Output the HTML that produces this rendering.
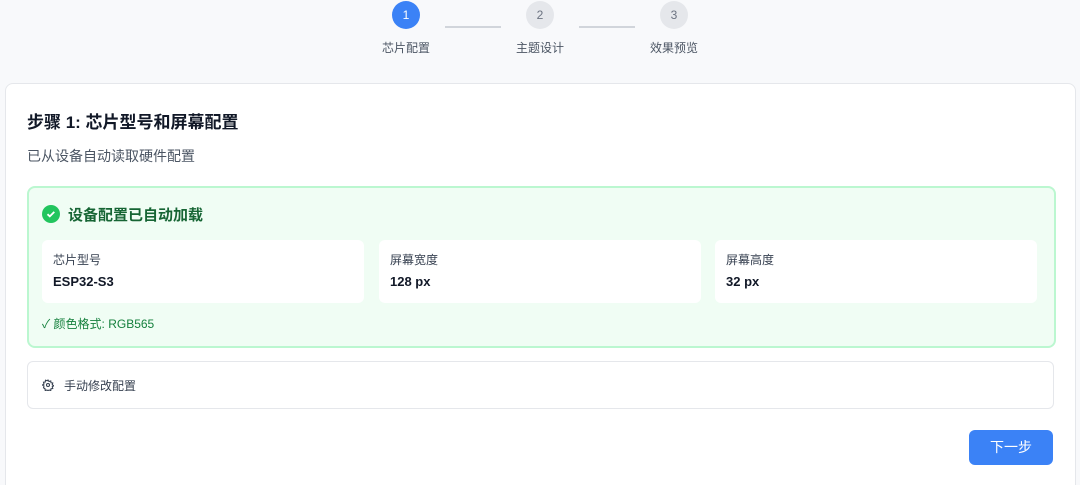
<!DOCTYPE html><html><head><meta charset="utf-8"><style>
html,body{margin:0;width:1080px;height:485px;overflow:hidden}
body{background:#f8f9fb;font-family:"Liberation Sans","Noto Sans CJK SC",sans-serif;position:relative}
.c{position:absolute;border-radius:50%;width:28px;height:28px;top:1px;text-align:center;line-height:28px;font-size:12px}
.l{position:absolute;top:39px;font-size:12px;color:#4b5563}
.ln{position:absolute;top:26px;height:2px;background:#d1d5db;width:56px}
.card{position:absolute;left:5px;top:83px;width:1069px;height:410px;background:#fff;border:1px solid #e5e7eb;border-radius:8px}
.g{position:absolute;left:21px;top:102px;width:1025px;height:158px;background:#f0fdf4;border:2px solid #bbf7d0;border-radius:8px}
.b{position:absolute;top:52px;width:322px;height:63px;background:#fff;border-radius:6px}
.b .k{position:absolute;left:11px;top:11px;font-size:12px;color:#374151}
.b .v{position:absolute;left:11px;top:34px;font-size:13px;color:#111827;font-weight:bold}
</style></head><body>
<div class="c" style="left:392px;background:#3b82f6;color:#fff">1</div>
<div class="c" style="left:526px;background:#e5e7eb;color:#6b7280">2</div>
<div class="c" style="left:660px;background:#e5e7eb;color:#6b7280">3</div>
<div class="ln" style="left:445px"></div><div class="ln" style="left:579px"></div>
<div class="l" style="left:382px">芯片配置</div>
<div class="l" style="left:516px">主题设计</div>
<div class="l" style="left:650px">效果预览</div>
<div class="card">
<div style="position:absolute;left:21px;top:24px;font-size:17px;font-weight:bold;color:#111827">步骤 1: 芯片型号和屏幕配置</div>
<div style="position:absolute;left:21px;top:62px;font-size:14px;color:#4b5563">已从设备自动读取硬件配置</div>
<div class="g">
<svg style="position:absolute;left:13px;top:17px" width="18" height="18" viewBox="0 0 18 18"><circle cx="9" cy="9" r="9" fill="#22c55e"/><path d="M5.5 9.2l2.3 2.2 4.5-4.5" stroke="#fff" stroke-width="1.8" fill="none"/></svg>
<div style="position:absolute;left:39px;top:16px;font-size:15px;font-weight:bold;color:#166534">设备配置已自动加载</div>
<div class="b" style="left:13px"><div class="k">芯片型号</div><div class="v">ESP32-S3</div></div>
<div class="b" style="left:350px"><div class="k">屏幕宽度</div><div class="v">128 px</div></div>
<div class="b" style="left:686px"><div class="k">屏幕高度</div><div class="v">32 px</div></div>
<div style="position:absolute;left:13px;top:127px;font-size:12px;color:#15803d">✓ 颜色格式: RGB565</div>
</div>
<div style="position:absolute;left:21px;top:277px;width:1025px;height:46px;border:1px solid #e5e7eb;border-radius:6px">
<svg style="position:absolute;left:14px;top:17px" width="12" height="12" viewBox="0 0 24 24" fill="none" stroke="#374151" stroke-width="2.2"><circle cx="12" cy="12" r="3"/><path d="M12 2l2 3 3.5-1 .5 3.5 3.5.5-1 3.5 3 2-3 2 1 3.5-3.5.5-.5 3.5-3.5-1-2 3-2-3-3.5 1-.5-3.5L3 17.5l1-3.5-3-2 3-2-1-3.5L6.5 6 7 2.5 10.5 3.5z"/></svg>
<span style="position:absolute;left:36px;top:15px;font-size:12px;color:#374151">手动修改配置</span></div>
<div style="position:absolute;left:963px;top:346px;width:84px;height:35px;background:#3b82f6;border-radius:6px;color:#fff;font-size:14px;text-align:center;line-height:35px">下一步</div>
</div>
</body></html>
